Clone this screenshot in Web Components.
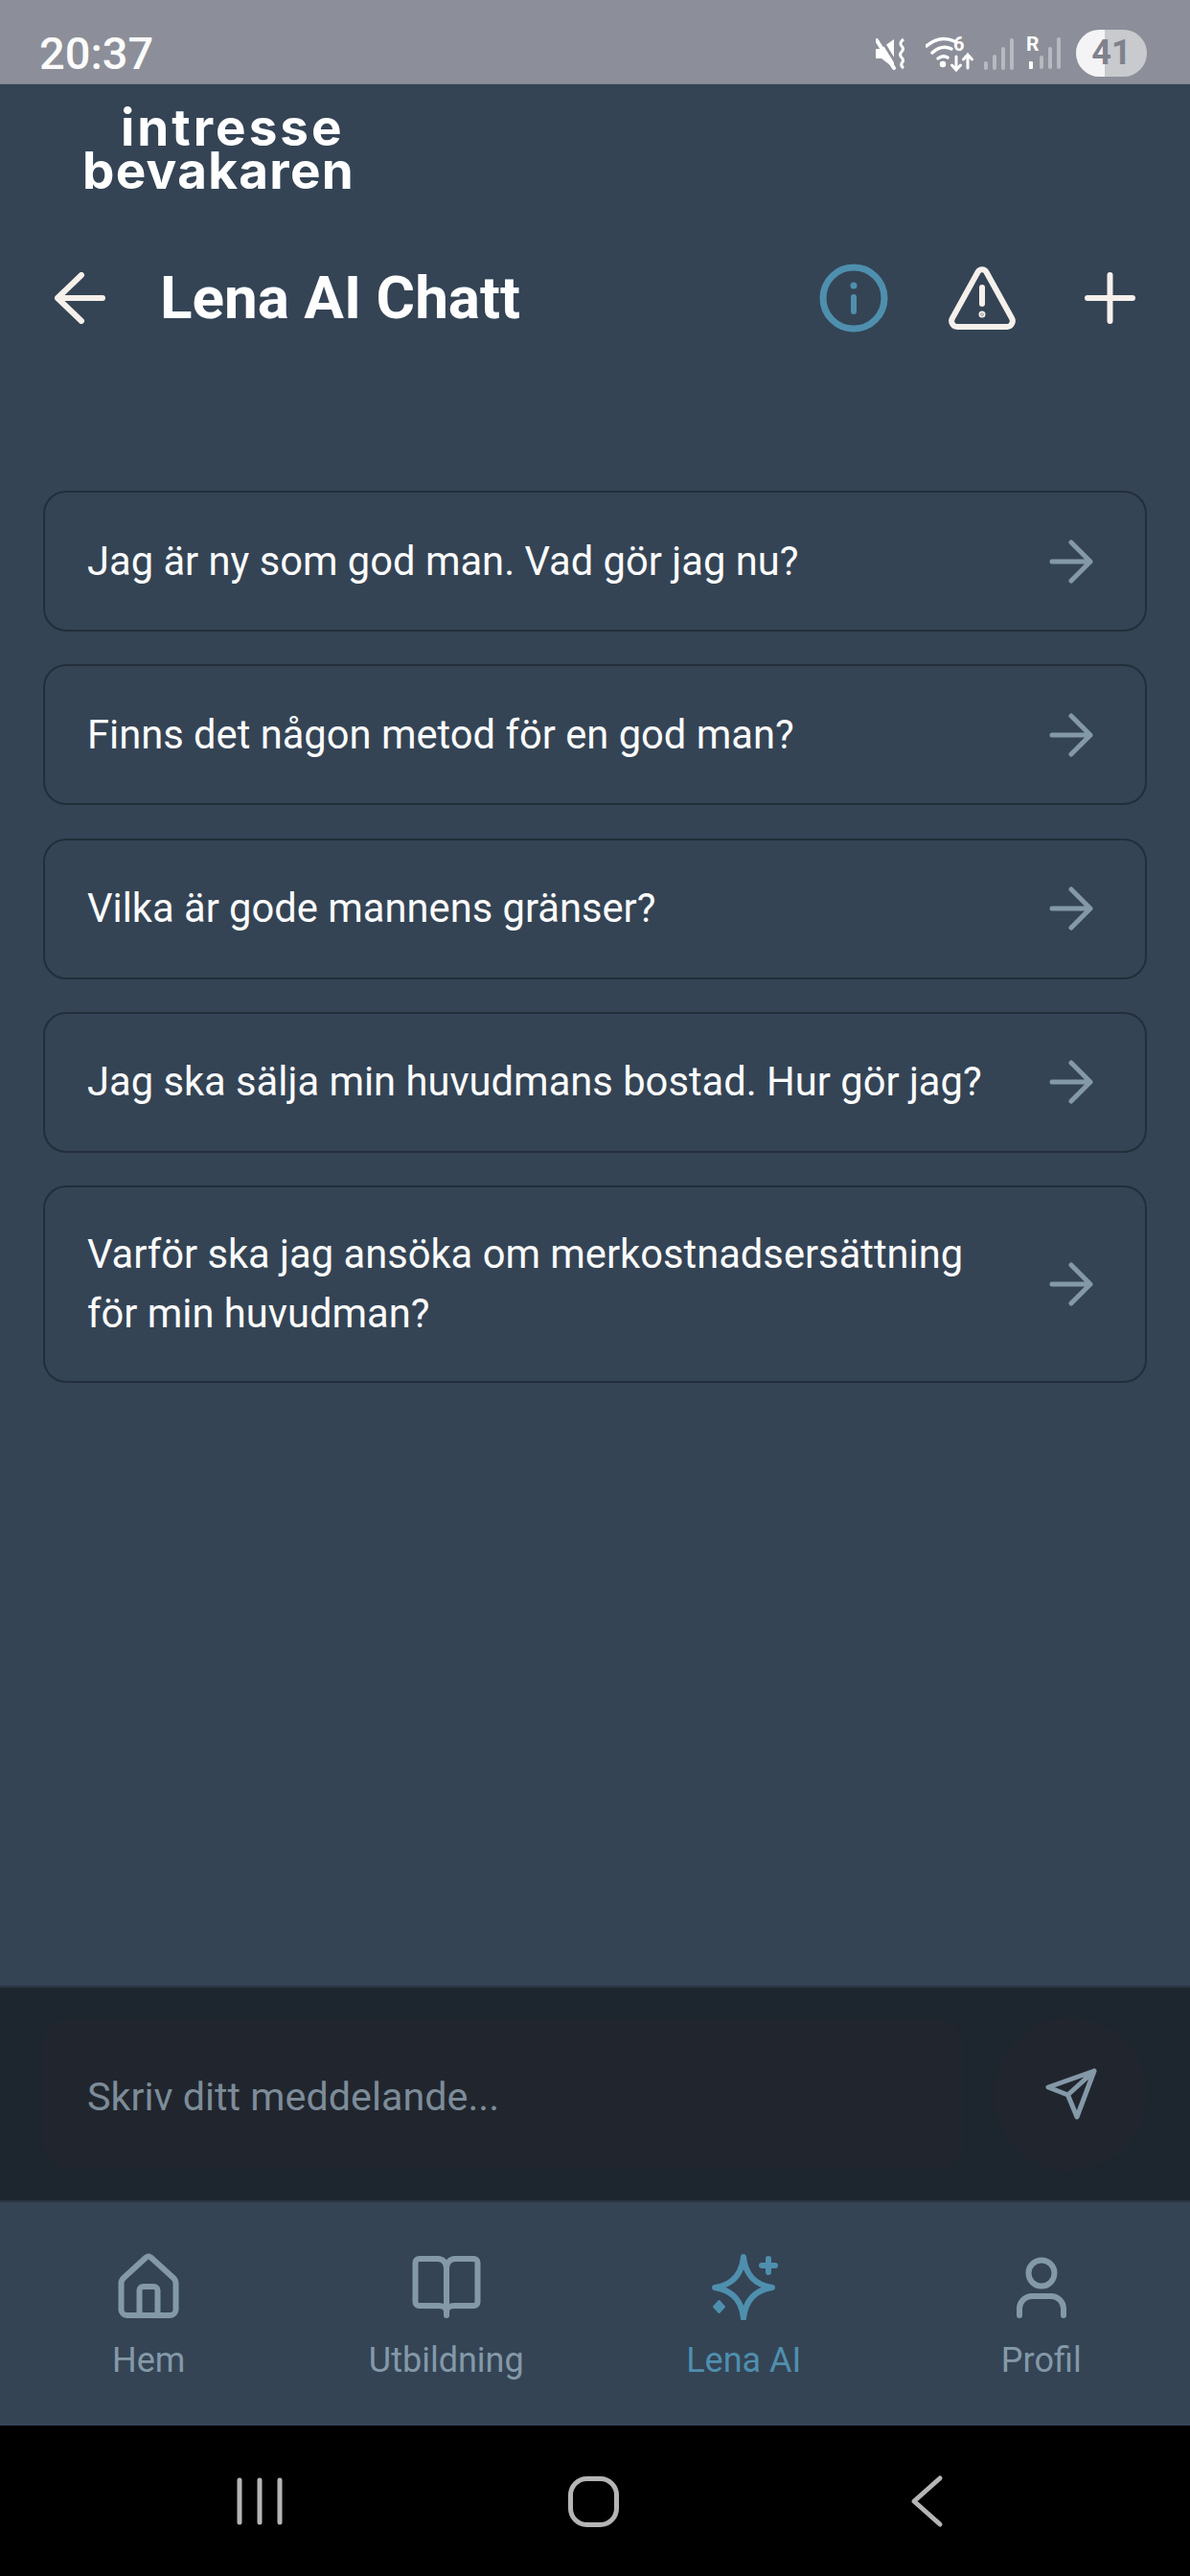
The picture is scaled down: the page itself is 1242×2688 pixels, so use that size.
<!DOCTYPE html>
<html lang="sv">
<head>
<meta charset="UTF-8">
<title>Lena AI Chatt</title>
<style>
  html, body { margin: 0; padding: 0; background: #344455; }
  body { font-family: Roboto, "Liberation Sans", sans-serif; }
</style>
</head>
<body>
<lena-app>
  <status-bar slot="status"></status-bar>
  <app-logo slot="logo"></app-logo>
  <chat-header slot="header" title="Lena AI Chatt"></chat-header>

  <prompt-card>Jag är ny som god man. Vad gör jag nu?</prompt-card>
  <prompt-card>Finns det någon metod för en god man?</prompt-card>
  <prompt-card>Vilka är gode mannens gränser?</prompt-card>
  <prompt-card>Jag ska sälja min huvudmans bostad. Hur gör jag?</prompt-card>
  <prompt-card>Varför ska jag ansöka om merkostnadsersättning<br>för min huvudman?</prompt-card>

  <chat-composer slot="composer" placeholder="Skriv ditt meddelande..."></chat-composer>

  <tab-bar slot="tabs">
    <tab-item label="Hem">
      <svg viewBox="0 0 72 72" width="72" height="72" fill="none" stroke="currentColor" stroke-width="6" stroke-linejoin="round" stroke-linecap="round">
        <path d="M33.500 6.500a4 4 0 0 1 5 0L62 28a8 8 0 0 1 2.500 6V61a6 6 0 0 1-6 6H13.500a6 6 0 0 1-6-6V34a8 8 0 0 1 2.500-6Z"/>
        <path d="M26.500 67V41a4 4 0 0 1 4-4h11a4 4 0 0 1 4 4V67"/>
      </svg>
    </tab-item>
    <tab-item label="Utbildning">
      <svg viewBox="0 0 72 72" width="72" height="72" fill="none" stroke="currentColor" stroke-width="6" stroke-linejoin="round" stroke-linecap="round">
        <path d="M36 18C36 12 32 8 27 8H7.500a4 4 0 0 0-4 4V53a4 4 0 0 0 4 4H28c4 0 8 2 8 6c0-4 4-6 8-6H64.500a4 4 0 0 0 4-4V12a4 4 0 0 0-4-4H45C40 8 36 12 36 18ZM36 18V67"/>
      </svg>
    </tab-item>
    <tab-item label="Lena AI" active>
      <svg viewBox="0 0 72 72" width="72" height="72" fill="none" stroke="currentColor" stroke-width="6" stroke-linejoin="round" stroke-linecap="round">
        <path d="M36 6Q39 34 66 38Q39 42 36 70Q33 42 6 38Q33 34 36 6Z"/>
        <path d="M62 8V22M55 15H69" stroke-width="6"/>
        <path d="M10.500 52l5.500 6-5.500 6-5.500-6Z" fill="currentColor" stroke-width="2"/>
      </svg>
    </tab-item>
    <tab-item label="Profil">
      <svg viewBox="0 0 72 72" width="72" height="72" fill="none" stroke="currentColor" stroke-width="6" stroke-linejoin="round" stroke-linecap="round">
        <circle cx="36" cy="23" r="13.500"/>
        <path d="M13 67V60a13 13 0 0 1 13-13H46a13 13 0 0 1 13 13V67"/>
      </svg>
    </tab-item>
  </tab-bar>

  <nav-buttons slot="nav"></nav-buttons>
</lena-app>

<script>
  // small helper, every element below has the same shadow root setup
  function shadow(el, html) {
    el.attachShadow({ mode: 'open' }).innerHTML = html;
  }

  class LenaApp extends HTMLElement {
    connectedCallback() {
      shadow(this, `
        <style>
          :host { display: flex; flex-direction: column; width: 1242px; height: 2688px; overflow: hidden; background: #344455; }
          .cards { flex: 1; display: flex; flex-direction: column; gap: 34.300px; padding: 165px 45px 0; }
        </style>
        <slot name="status"></slot>
        <slot name="logo"></slot>
        <slot name="header"></slot>
        <div class="cards"><slot></slot></div>
        <slot name="composer"></slot>
        <slot name="tabs"></slot>
        <slot name="nav"></slot>`);
    }
  }

  class StatusBar extends HTMLElement {
    connectedCallback() {
      shadow(this, `
        <style>
          :host { display: flex; align-items: center; justify-content: space-between; box-sizing: border-box; height: 88px; padding: 0 45px 0 41px; background: #8c8f99; border-bottom: 1px solid #7b8290; color: #fff; }
          .time { font: 500 47px/1 Roboto, sans-serif; margin-top: 23px; color: #fbfbfb; }
          .icons { display: flex; align-items: center; margin-top: 24px; }
          svg { display: block; }
          .lbl { font-family: Roboto, sans-serif; font-weight: 700; }
          .bat { box-sizing: border-box; width: 74px; height: 49px; border-radius: 25px; margin-left: 16px; background: linear-gradient(90deg, #f4f4f6 41%, #c8cace 41%); color: #7f828d; font: 700 36px/49px Roboto, sans-serif; text-align: center; }
        </style>
        <div class="time">20:37</div>
        <div class="icons">
          <svg width="33" height="34" viewBox="0 0 33 34" fill="#fff" style="margin-right:19px">
            <path d="M0 12h5L19 2V32L6 22H0Z"/>
            <path d="M4 -1L23 30" stroke="#8c8f99" stroke-width="3"/>
            <path d="M1 3L19 32" stroke="#fff" stroke-width="4" stroke-linecap="round"/>
            <path d="M29 2q-5 4-2 7q3 3 0 6t0 6t0 6q-1 3 2 5" fill="none" stroke="#fff" stroke-width="3"/>
          </svg>
          <svg width="50" height="46" viewBox="0 -8 50 46" fill="none" stroke="#fff" stroke-width="3.500" stroke-linecap="round" style="margin:0 11px 8px 0">
            <path d="M1 11Q15 -1 30 6"/>
            <path d="M7 18Q17 9 27 14"/>
            <path d="M13 24Q18 20 23 23"/>
            <circle cx="18" cy="30" r="1.500" fill="#fff"/>
            <path d="M32 22V36M27.500 31L32 36L36.500 31" stroke-width="3"/>
            <path d="M44 34V20M39.500 25L44 20L48.500 25" stroke-width="3"/>
            <text class="lbl" x="29" y="16" font-size="20" fill="#fff" stroke="none">6</text>
          </svg>
          <svg width="32" height="34" viewBox="0 0 32 34" fill="rgba(255,255,255,.38)" style="margin-right:12px">
            <rect x="0" y="25" width="4" height="9" rx="2"/>
            <rect x="9" y="18" width="4" height="16" rx="2"/>
            <rect x="18" y="10" width="4" height="24" rx="2"/>
            <rect x="27" y="1" width="4" height="33" rx="2"/>
          </svg>
          <svg width="36" height="46" viewBox="0 -8 36 46" fill="rgba(255,255,255,.38)" style="margin-bottom:8px">
            <text class="lbl" x="0" y="16" font-size="21" fill="#fff">R</text>
            <rect x="3" y="27" width="4" height="8" rx="1" fill="#fff"/>
            <rect x="14" y="21" width="4" height="14" rx="2"/>
            <rect x="23" y="12" width="4" height="23" rx="2"/>
            <rect x="32" y="2" width="4" height="33" rx="2"/>
          </svg>
          <div class="bat">41</div>
        </div>`);
    }
  }

  class AppLogo extends HTMLElement {
    connectedCallback() {
      shadow(this, `
        <style>
          :host { display: block; box-sizing: border-box; height: 187px; padding: 23px 0 0 86px; color: #fff; }
          div { font: 700 53px/45px Inter, Roboto, sans-serif; letter-spacing: 1.300px; }
          .top { padding-left: 40px; letter-spacing: 3px; }
        </style>
        <div class="top">intresse</div>
        <div>bevakaren</div>`);
    }
  }

  class ChatHeader extends HTMLElement {
    connectedCallback() {
      shadow(this, `
        <style>
          :host { display: flex; align-items: center; height: 72px; padding-left: 57px; color: #f6f0eb; }
          svg { display: block; flex: none; }
          h1 { flex: 1; margin: 0 0 0 57px; font: 700 62px/72px Roboto, sans-serif; color: #fff; }
          .info { color: #4f8fae; margin-right: 62px; }
          .warn { margin-right: 71px; }
          .plus { margin-right: 57px; }
        </style>
        <svg width="53" height="54" viewBox="0 0 53 54" fill="none" stroke="currentColor" stroke-width="6" stroke-linecap="round" stroke-linejoin="round">
          <path d="M50 27H3M28 3L3 27L28 51"/>
        </svg>
        <h1>${this.getAttribute('title')}</h1>
        <svg class="info" width="72" height="72" viewBox="0 0 72 72" fill="none" stroke="currentColor" stroke-width="7" stroke-linecap="round">
          <circle cx="36" cy="36" r="32"/>
          <path d="M36 35V50" stroke-width="6"/>
          <circle cx="36" cy="23" r="1.500" stroke-width="4" fill="currentColor"/>
        </svg>
        <svg class="warn" width="72" height="68" viewBox="0 0 72 68" fill="none" stroke="currentColor" stroke-width="6" stroke-linecap="round" stroke-linejoin="round">
          <path d="M31.500 7a5 5 0 0 1 9 0L67 55a6 6 0 0 1-5 9H10a6 6 0 0 1-5-9Z"/>
          <path d="M36 23V40"/>
          <circle cx="36" cy="51" r="1" stroke-width="5" fill="currentColor"/>
        </svg>
        <svg class="plus" width="53" height="54" viewBox="0 0 53 54" fill="none" stroke="currentColor" stroke-width="6" stroke-linecap="round">
          <path d="M3 27H50M26.500 3V51"/>
        </svg>`);
    }
  }

  class PromptCard extends HTMLElement {
    connectedCallback() {
      shadow(this, `
        <style>
          :host { display: flex; align-items: center; justify-content: space-between; box-sizing: border-box; min-height: 147px; padding: 39px 54px 39px 44px; border: 2px solid #222e3a; border-radius: 24px; color: #fbfbfb; font: 400 41.700px/62px Roboto, sans-serif; }
          svg { display: block; flex: none; }
        </style>
        <div><slot></slot></div>
        <svg width="46" height="46" viewBox="0 0 46 46" fill="none" stroke="#8499a8" stroke-width="5" stroke-linecap="round" stroke-linejoin="round">
          <path d="M3 23H43M23 3L43 23L23 43"/>
        </svg>`);
    }
  }

  class ChatComposer extends HTMLElement {
    connectedCallback() {
      shadow(this, `
        <style>
          :host { display: flex; align-items: center; gap: 32px; box-sizing: border-box; height: 226px; padding: 0 45px; background: #1d262e; border-top: 2px solid #2a3742; border-bottom: 2px solid #2a3742; }
          .field { flex: 1; display: flex; align-items: center; box-sizing: border-box; height: 157px; padding: 8px 0 0 46px; border-radius: 25px; background: #21262e; color: #7d8c99; font: 400 41.300px/1 Roboto, sans-serif; }
          .send { display: flex; align-items: center; justify-content: center; flex: none; width: 160px; height: 160px; border-radius: 50%; background: #21262e; }
          svg { display: block; }
        </style>
        <div class="field">${this.getAttribute('placeholder')}</div>
        <div class="send">
          <svg width="72" height="72" viewBox="0 0 72 72" fill="none" stroke="#8499a8" stroke-width="5" stroke-linecap="round" stroke-linejoin="round">
            <path d="M61 12L13 29L33.500 37L43 60ZM61 12L33.500 37"/>
          </svg>
        </div>`);
    }
  }

  class TabBar extends HTMLElement {
    connectedCallback() {
      shadow(this, `
        <style>
          :host { display: grid; grid-template-columns: repeat(4, 1fr); box-sizing: border-box; height: 233px; padding-top: 51px; background: #344455; }
        </style>
        <slot></slot>`);
    }
  }

  class TabItem extends HTMLElement {
    connectedCallback() {
      shadow(this, `
        <style>
          :host { display: flex; flex-direction: column; align-items: center; color: #8499a8; }
          :host([active]) { color: #4f8fae; }
          span { margin-top: 21px; font: 400 36px/42px Roboto, sans-serif; }
          ::slotted(svg) { display: block; }
        </style>
        <slot></slot>
        <span>${this.getAttribute('label')}</span>`);
    }
  }

  class NavButtons extends HTMLElement {
    connectedCallback() {
      shadow(this, `
        <style>
          :host { display: flex; align-items: center; justify-content: center; height: 157px; background: #000; }
          svg { display: block; }
        </style>
        <svg width="1242" height="157" viewBox="0 0 1242 157" fill="none" stroke="#b5b5b5" stroke-width="5" stroke-linecap="round" stroke-linejoin="round">
          <path d="M250 57V101M271 57V101M292 57V101"/>
          <rect x="595.500" y="55.500" width="48" height="48" rx="17"/>
          <path d="M981 55L954 79L981 103"/>
        </svg>`);
    }
  }

  customElements.define('lena-app', LenaApp);
  customElements.define('status-bar', StatusBar);
  customElements.define('app-logo', AppLogo);
  customElements.define('chat-header', ChatHeader);
  customElements.define('prompt-card', PromptCard);
  customElements.define('chat-composer', ChatComposer);
  customElements.define('tab-bar', TabBar);
  customElements.define('tab-item', TabItem);
  customElements.define('nav-buttons', NavButtons);
</script>
</body>
</html>
